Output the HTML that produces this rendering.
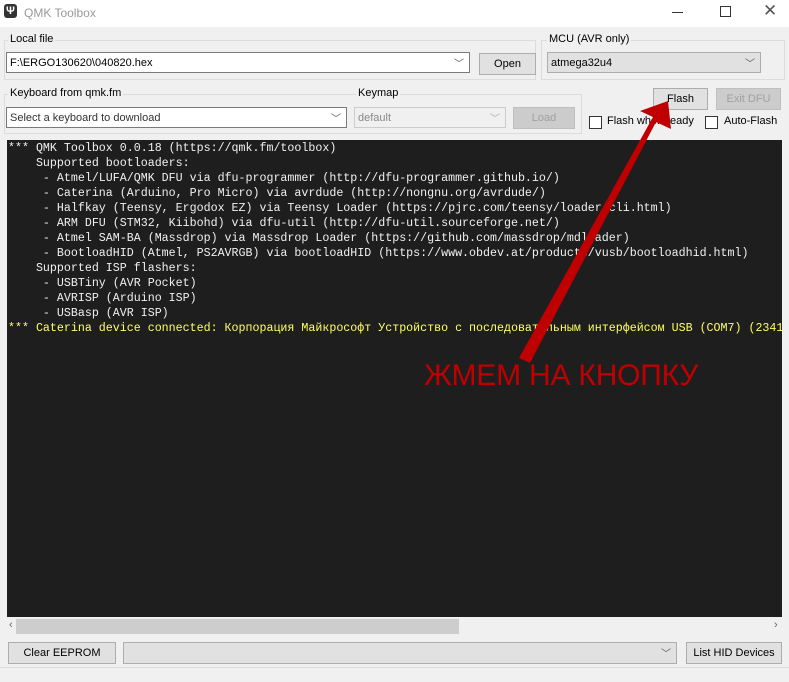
<!DOCTYPE html>
<html><head><meta charset="utf-8"><style>
*{box-sizing:border-box;margin:0;padding:0}
body{width:789px;height:682px;background:#f0f0f0;font-family:"Liberation Sans",sans-serif;font-size:11px;color:#000;position:relative;overflow:hidden}
.a{position:absolute}
.title{left:0;top:0;width:789px;height:27px;background:#fff}
.gb{border:1px solid #dcdcdc}
.lbl{background:#f0f0f0;padding:0 2px}
.inp{background:#fff;border:1px solid #7a7a7a;height:21px;padding:4px 3px;font-size:11px}
.cmb{background:#e1e1e1;border:1px solid #adadad;height:21px;padding:4px 3px}
.btn{background:#e1e1e1;border:1px solid #adadad;text-align:center;height:22px;line-height:20px}
.dis{color:#a0a0a0;background:#cccccc;border-color:#bfbfbf}
.chev{position:absolute;right:5px;top:2px;font-size:10px;color:#555}
.cb{width:13px;height:13px;border:1px solid #333;background:#fff}
.con{left:7px;top:140px;width:775px;height:477px;background:#1e1e1e;font-family:"Liberation Mono",monospace;font-size:11.65px;line-height:15px;color:#f0f0f0;white-space:pre;padding:1px 0 0 1px;overflow:hidden}
.y{color:#ffff66}
</style></head><body>
<div class="a title">
<div class="a" style="left:4px;top:4px;width:13px;height:14px;background:#333;border-radius:3px;color:#fff;font-size:11px;text-align:center;line-height:14px;font-weight:bold">Ψ</div>
<div class="a" style="left:24px;top:6px;color:#999;font-size:12px">QMK Toolbox</div>
<div class="a" style="left:672px;top:12px;width:11px;height:1px;background:#333"></div>
<div class="a" style="left:720px;top:6px;width:11px;height:11px;border:1px solid #333"></div>
<div class="a" style="left:763px;top:1px;font-size:17px;color:#555;font-weight:100">✕</div>
</div>
<div class="a gb" style="left:4px;top:40px;width:532px;height:40px"></div>
<div class="a lbl" style="left:8px;top:33px">Local file</div>
<div class="a inp" style="left:6px;top:52px;width:464px">F:\ERGO130620\040820.hex<span class="chev">﹀</span></div>
<div class="a btn" style="left:479px;top:53px;width:57px">Open</div>
<div class="a gb" style="left:541px;top:40px;width:244px;height:40px"></div>
<div class="a lbl" style="left:547px;top:33px">MCU (AVR only)</div>
<div class="a cmb" style="left:547px;top:52px;width:214px">atmega32u4<span class="chev">﹀</span></div>
<div class="a gb" style="left:4px;top:94px;width:578px;height:40px"></div>
<div class="a lbl" style="left:8px;top:87px">Keyboard from qmk.fm</div>
<div class="a lbl" style="left:356px;top:87px">Keymap</div>
<div class="a inp" style="left:6px;top:107px;width:341px;color:#333">Select a keyboard to download<span class="chev">﹀</span></div>
<div class="a inp" style="left:354px;top:107px;width:152px;background:#f0f0f0;border-color:#ccc;color:#888">default<span class="chev" style="color:#aaa">﹀</span></div>
<div class="a btn dis" style="left:513px;top:107px;width:62px">Load</div>
<div class="a btn" style="left:653px;top:88px;width:55px">Flash</div>
<div class="a btn dis" style="left:716px;top:88px;width:65px">Exit DFU</div>
<div class="a cb" style="left:589px;top:116px"></div>
<div class="a" style="left:607px;top:115px">Flash when ready</div>
<div class="a cb" style="left:705px;top:116px"></div>
<div class="a" style="left:724px;top:115px">Auto-Flash</div>
<div class="a con">*** QMK Toolbox 0.0.18 (https://qmk.fm/toolbox)
    Supported bootloaders:
     - Atmel/LUFA/QMK DFU via dfu-programmer (http://dfu-programmer.github.io/)
     - Caterina (Arduino, Pro Micro) via avrdude (http://nongnu.org/avrdude/)
     - Halfkay (Teensy, Ergodox EZ) via Teensy Loader (https://pjrc.com/teensy/loader_cli.html)
     - ARM DFU (STM32, Kiibohd) via dfu-util (http://dfu-util.sourceforge.net/)
     - Atmel SAM-BA (Massdrop) via Massdrop Loader (https://github.com/massdrop/mdloader)
     - BootloadHID (Atmel, PS2AVRGB) via bootloadHID (https://www.obdev.at/products/vusb/bootloadhid.html)
    Supported ISP flashers:
     - USBTiny (AVR Pocket)
     - AVRISP (Arduino ISP)
     - USBasp (AVR ISP)
<span class="y">*** Caterina device connected: Корпорация Майкрософт Устройство с последовательным интерфейсом USB (COM7) (2341:8037:0001)</span></div>
<div class="a" style="left:7px;top:618px;width:775px;height:17px;background:#f0f0f0"></div>
<div class="a" style="left:16px;top:619px;width:443px;height:15px;background:#cdcdcd"></div>
<div class="a" style="left:9px;top:619px;font-size:11px;color:#666">‹</div>
<div class="a" style="left:774px;top:619px;font-size:11px;color:#666">›</div>
<svg class="a" style="left:0;top:0" width="789" height="682">
<polygon points="519,358 530,363 656,122 671,129 668,101 640,111 653,117" fill="#c00000"/>
</svg>
<div class="a" style="left:424px;top:359px;font-size:30px;color:#c00000;letter-spacing:-0.2px">ЖМЕМ НА КНОПКУ</div>
<div class="a btn" style="left:8px;top:642px;width:108px">Clear EEPROM</div>
<div class="a cmb" style="left:123px;top:642px;width:554px;height:22px"><span class="chev">﹀</span></div>
<div class="a btn" style="left:686px;top:642px;width:96px">List HID Devices</div>
<div class="a" style="left:0;top:667px;width:789px;height:1px;background:#dcdcdc"></div>
</body></html>
